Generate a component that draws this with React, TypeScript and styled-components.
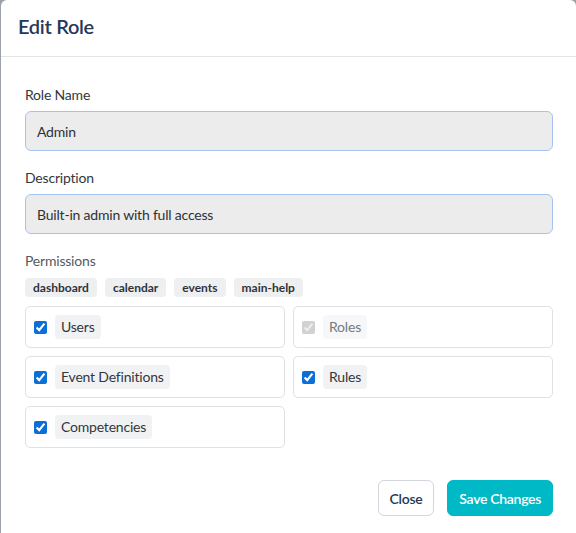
import React, { useState } from "react";
import styled, { createGlobalStyle } from "styled-components";

const GlobalStyle = createGlobalStyle`
  html, body {
    margin: 0;
    padding: 0;
    background: #9da2aa;
    overflow: hidden;
  }
  body {
    font-family: Lato, "Open Sans", sans-serif;
    letter-spacing: -0.2px;
  }
`;

type Permission = {
  id: string;
  label: string;
  checked: boolean;
  disabled?: boolean;
};

const initialPermissions: Permission[] = [
  { id: "users", label: "Users", checked: true },
  { id: "roles", label: "Roles", checked: true, disabled: true },
  { id: "event-definitions", label: "Event Definitions", checked: true },
  { id: "rules", label: "Rules", checked: true },
  { id: "competencies", label: "Competencies", checked: true },
];

const modules = ["dashboard", "calendar", "events", "main-help"];

const App = () => {
  const [name, setName] = useState("Admin");
  const [description, setDescription] = useState("Built-in admin with full access");
  const [permissions, setPermissions] = useState(initialPermissions);

  const toggleHandler = (id: string) => {
    setPermissions((prev) =>
      prev.map((p) => (p.id === id ? { ...p, checked: !p.checked } : p))
    );
  };

  return (
    <>
      <GlobalStyle />
      <Modal>
        <Header>
          <Title>Edit Role</Title>
        </Header>
        <Body>
          <Field>
            <Label>Role Name</Label>
            <Input value={name} onChange={(e) => setName(e.target.value)} />
          </Field>
          <Field>
            <Label>Description</Label>
            <Input
              value={description}
              onChange={(e) => setDescription(e.target.value)}
            />
          </Field>
          <Label $muted>Permissions</Label>
          <Tags>
            {modules.map((m) => (
              <Tag key={m}>{m}</Tag>
            ))}
          </Tags>
          <PermissionGrid>
            {permissions.map((p) => (
              <PermissionCard key={p.id}>
                <Checkbox
                  type="checkbox"
                  checked={p.checked}
                  disabled={p.disabled}
                  onChange={() => toggleHandler(p.id)}
                />
                <Chip $disabled={p.disabled}>{p.label}</Chip>
              </PermissionCard>
            ))}
          </PermissionGrid>
          <Footer>
            <Button>Close</Button>
            <Button $primary>Save Changes</Button>
          </Footer>
        </Body>
      </Modal>
    </>
  );
};

export default App;

const Modal = styled("div")({
  marginLeft: "1px",
  width: "575px",
  height: "100vh",
  background: "#fff",
  borderRadius: "6px 6px 0 0",
  boxSizing: "border-box",
});

const Header = styled("div")({
  height: "57px",
  boxSizing: "border-box",
  borderBottom: "1px solid #e3e4e6",
  display: "flex",
  alignItems: "center",
  padding: "0 17px 5px",
});

const Title = styled("h2")({
  margin: 0,
  fontSize: "20px",
  fontWeight: 600,
  color: "#253858",
  letterSpacing: "-0.3px",
});

const Body = styled("div")({
  padding: "28px 23px 0 24px",
  display: "flex",
  flexDirection: "column",
});

const Field = styled("div")({
  display: "flex",
  flexDirection: "column",
  marginBottom: "17px",
});

const Label = styled("label")<{ $muted?: boolean }>((p) => ({
  fontSize: "14px",
  lineHeight: "20px",
  color: p.$muted ? "#555a61" : "#33373d",
  marginBottom: "6px",
}));

const Input = styled("input")({
  height: "40px",
  boxSizing: "border-box",
  background: "#ececec",
  border: "1px solid #a6c2f2",
  borderRadius: "6px",
  padding: "0 11px",
  fontFamily: "inherit",
  fontSize: "14px",
  letterSpacing: "inherit",
  color: "#2d3136",
  outline: "none",
});

const Tags = styled("div")({
  display: "flex",
  gap: "8px",
  marginTop: "1px",
  marginBottom: "9px",
});

const Tag = styled("span")({
  height: "19px",
  lineHeight: "19px",
  padding: "0 8px",
  background: "#eeeff1",
  borderRadius: "4px",
  fontSize: "12px",
  fontWeight: 700,
  letterSpacing: "0",
  color: "#2f3338",
});

const PermissionGrid = styled("div")({
  display: "grid",
  gridTemplateColumns: "1fr 1fr",
  gap: "8px",
});

const PermissionCard = styled("div")({
  height: "42px",
  boxSizing: "border-box",
  border: "1px solid #dfe1e4",
  borderRadius: "5px",
  display: "flex",
  alignItems: "center",
  gap: "8px",
  padding: "0 8px",
});

const Checkbox = styled("input")({
  width: "13px",
  height: "13px",
  margin: 0,
  accentColor: "#0b6fd6",
});

const Chip = styled("span")<{ $disabled?: boolean }>((p) => ({
  height: "24px",
  lineHeight: "24px",
  padding: "0 6px",
  background: p.$disabled ? "#f6f7f8" : "#f1f2f4",
  borderRadius: "4px",
  fontSize: "14px",
  color: p.$disabled ? "#757a81" : "#33373d",
}));

const Footer = styled("div")({
  display: "flex",
  justifyContent: "flex-end",
  gap: "13px",
  marginTop: "32px",
});

const Button = styled("button")<{ $primary?: boolean }>((p) => ({
  height: "36px",
  padding: "0 11px",
  borderRadius: "6px",
  border: p.$primary ? "1px solid #00b9c6" : "1px solid #d3d6dc",
  background: p.$primary ? "#00b9c6" : "#fff",
  color: p.$primary ? "#fff" : "#253858",
  fontFamily: "inherit",
  fontSize: "14px",
  fontWeight: 600,
  letterSpacing: "-0.3px",
  cursor: "pointer",
}));
